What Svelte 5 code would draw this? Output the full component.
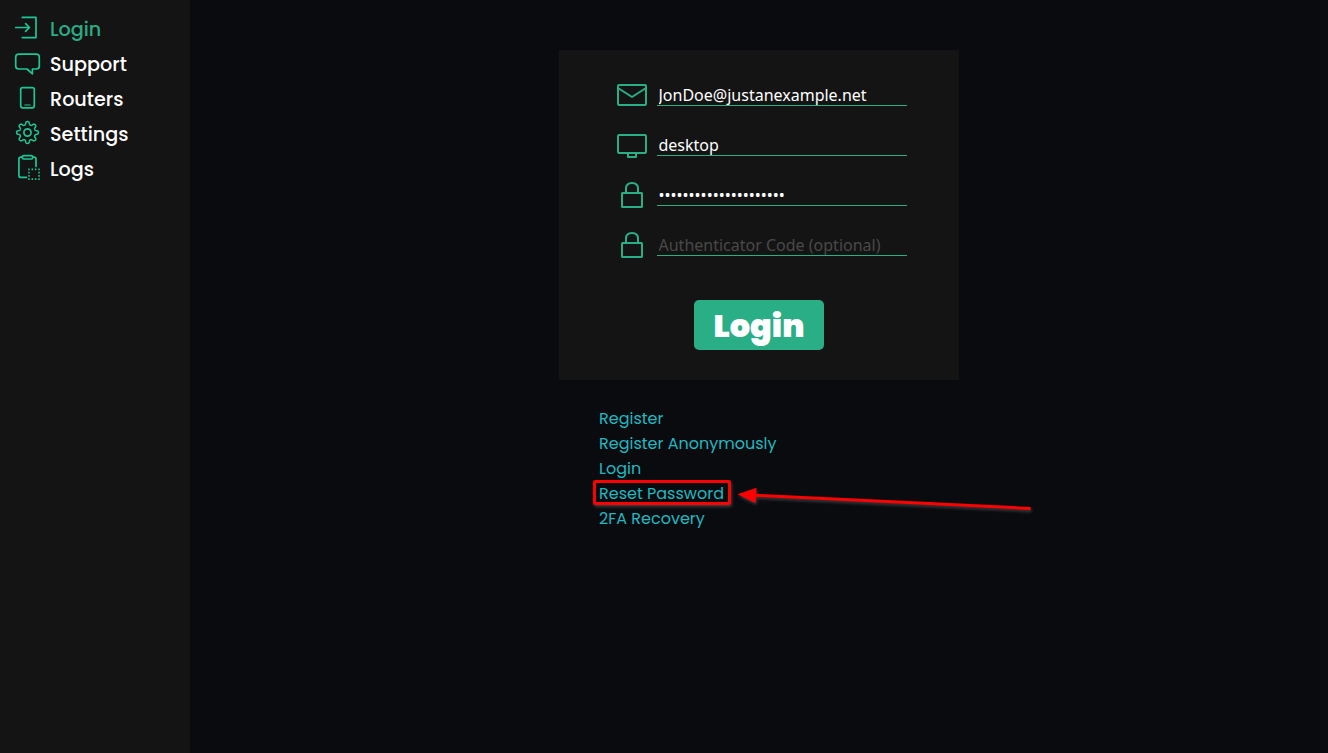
<script>
  const nav = [
    { label: 'Login', icon: 'login', active: true },
    { label: 'Support', icon: 'support' },
    { label: 'Routers', icon: 'router' },
    { label: 'Settings', icon: 'gear' },
    { label: 'Logs', icon: 'logs' }
  ];
  const fields = [
    { icon: 'mail', type: 'text', value: 'JonDoe@justanexample.net' },
    { icon: 'desktop', type: 'text', value: 'desktop' },
    { icon: 'lock', type: 'password', value: 'correcthorsebattery21' },
    { icon: 'lock', type: 'text', value: '', placeholder: 'Authenticator Code (optional)' }
  ];
  const links = [
    { label: 'Register' },
    { label: 'Register Anonymously' },
    { label: 'Login' },
    { label: 'Reset Password', marked: true },
    { label: '2FA Recovery' }
  ];

  // Outline of the eight-toothed settings wheel
  let gear = '';
  for (let i = 0; i <= 160; i++) {
    const a = (i / 160) * Math.PI * 2;
    const r = 9.4 + 1.5 * Math.tanh(2 * Math.cos(8 * a)) / Math.tanh(2);
    gear += `${i ? 'L' : 'M'}${(17.5 + r * Math.sin(a)).toFixed(2)} ${(17.5 - r * Math.cos(a)).toFixed(2)}`;
  }
</script>

<div class="page">
  <nav>
    {#each nav as item}
      <a class:active={item.active} href="#top">
        <svg class="nav-icon" width="35" height="35" viewBox="0 0 35 35">
          {#if item.icon === 'login'}
            <path d="M12.3 7.4H26V27.6H12.3M5.7 17.5H19.5M15.6 13.6L19.5 17.5L15.6 21.4" />
          {:else if item.icon === 'support'}
            <path d="M8.8 9.2H26.2Q29.3 9.2 29.3 12.2V21Q29.3 24 26.2 24H22.4V28.8L17 24H8.8Q5.7 24 5.7 21V12.2Q5.7 9.2 8.8 9.2Z" />
          {:else if item.icon === 'router'}
            <rect x="10.7" y="7.6" width="13.6" height="20.2" rx="2" />
            <path class="thin" d="M14.8 25H20.2" />
          {:else if item.icon === 'gear'}
            <path class="wheel" d={gear + 'Z'} />
            <circle cx="17.5" cy="17.5" r="3.6" />
          {:else}
            <path d="M12.3 7.2H10.9Q8.9 7.2 8.9 9.2V25.4Q8.9 27.4 10.9 27.4H16.4M22.7 7.2H24Q26 7.2 26 9.2V16.4" />
            <rect x="12.3" y="5.7" width="10.4" height="3.3" rx="1.3" />
            <path class="dots" d="M18.2 19.3H30M18.2 29.2H30M18.2 22.6H19.7M18.2 25.9H19.7M28.3 22.6H29.8M28.3 25.9H29.8" />
          {/if}
        </svg>
        <span>{item.label}</span>
      </a>
    {/each}
  </nav>

  <main>
    <form>
      {#each fields as f}
        <label>
          <svg width="30" height="30" viewBox="0 0 30 30">
            {#if f.icon === 'mail'}
              <rect x="1" y="5" width="28" height="20" rx="1" />
              <path d="M1 8L15 17L29 8" />
            {:else if f.icon === 'desktop'}
              <rect x="1" y="5" width="28" height="18" rx="1" />
              <path d="M11 23V27H19V23" />
            {:else}
              <rect x="5" y="13" width="20" height="14" rx=".5" />
              <path d="M9 13V8.5Q9 3 15 3T21 8.5V13" />
            {/if}
          </svg>
          <input type={f.type} value={f.value} placeholder={f.placeholder} />
        </label>
      {/each}
      <button type="button">Login</button>
    </form>

    <div class="links">
      {#each links as l}
        <a href="#top" class:marked={l.marked}>{l.label}</a>
      {/each}
      <svg class="arrow" width="310" height="40" viewBox="0 0 310 40">
        <path class="shaft" d="M23 15.3L297.5 28.4" />
        <path class="head" d="M5.5 14.3L24.5 7.8L23.5 23Z" />
      </svg>
    </div>
  </main>
</div>

<style>
  :global(body) { margin: 0; background: #090b0f; }
  .page { display: flex; min-height: 753px; font-family: Poppins, sans-serif; }
  nav { width: 190px; padding-top: 10px; box-sizing: border-box; background: #141414; }
  nav a { display: flex; height: 35px; padding-left: 10px; gap: 5px; color: #fff; text-decoration: none; font-size: 19.2px; font-weight: 500; line-height: 40px; }
  nav a.active { color: #2aac85; }
  svg { display: block; flex: none; fill: none; stroke: #2aae86; stroke-width: 2; stroke-linejoin: round; }
  .nav-icon { stroke: #1dc594; stroke-width: 1.7; stroke-linecap: round; }
  .wheel { stroke-width: 1.5; }
  .thin { stroke-width: 1; }
  .dots { stroke-dasharray: 1.5 1.85; stroke-linecap: butt; }
  main { flex: 1; padding-top: 50px; }
  form { width: 400px; height: 330px; margin: 0 auto; padding: 30px 52px 0 58px; box-sizing: border-box; background: #141414; }
  label { display: flex; height: 50px; gap: 10px; }
  input { width: 250px; height: 26px; padding: 5px 1.5px 0; box-sizing: border-box; border: 0; border-bottom: 1px solid #2aae86; outline: 0; background: none; color: #fff; font: 16px/20px 'Noto Sans', sans-serif; }
  input::placeholder { color: #494949; opacity: 1; }
  button { display: block; width: 130px; height: 50px; margin: 20px 0 0 77px; padding: 2px 0 0; border: 0; border-radius: 5px; background: #2aae86; color: #fff; font: 900 32px/48px Poppins, sans-serif; }
  .links { position: relative; width: 320px; margin: 26px auto 0; }
  .links a { display: block; height: 25px; color: #22b8c0; text-decoration: none; font-size: 16px; line-height: 25px; }
  .marked { position: relative; }
  .marked::after { content: ''; position: absolute; left: -6px; top: -1px; width: 132px; height: 19px; border: 3px solid #f00; border-radius: 2px; box-shadow: 1px 2px 3px #555a; }
  .arrow { position: absolute; left: 133px; top: 74px; filter: drop-shadow(1px 2px 1.5px #555a); }
  .shaft { stroke: #f00; stroke-width: 3; stroke-linecap: round; }
  .head { fill: #f00; stroke: none; }
</style>
